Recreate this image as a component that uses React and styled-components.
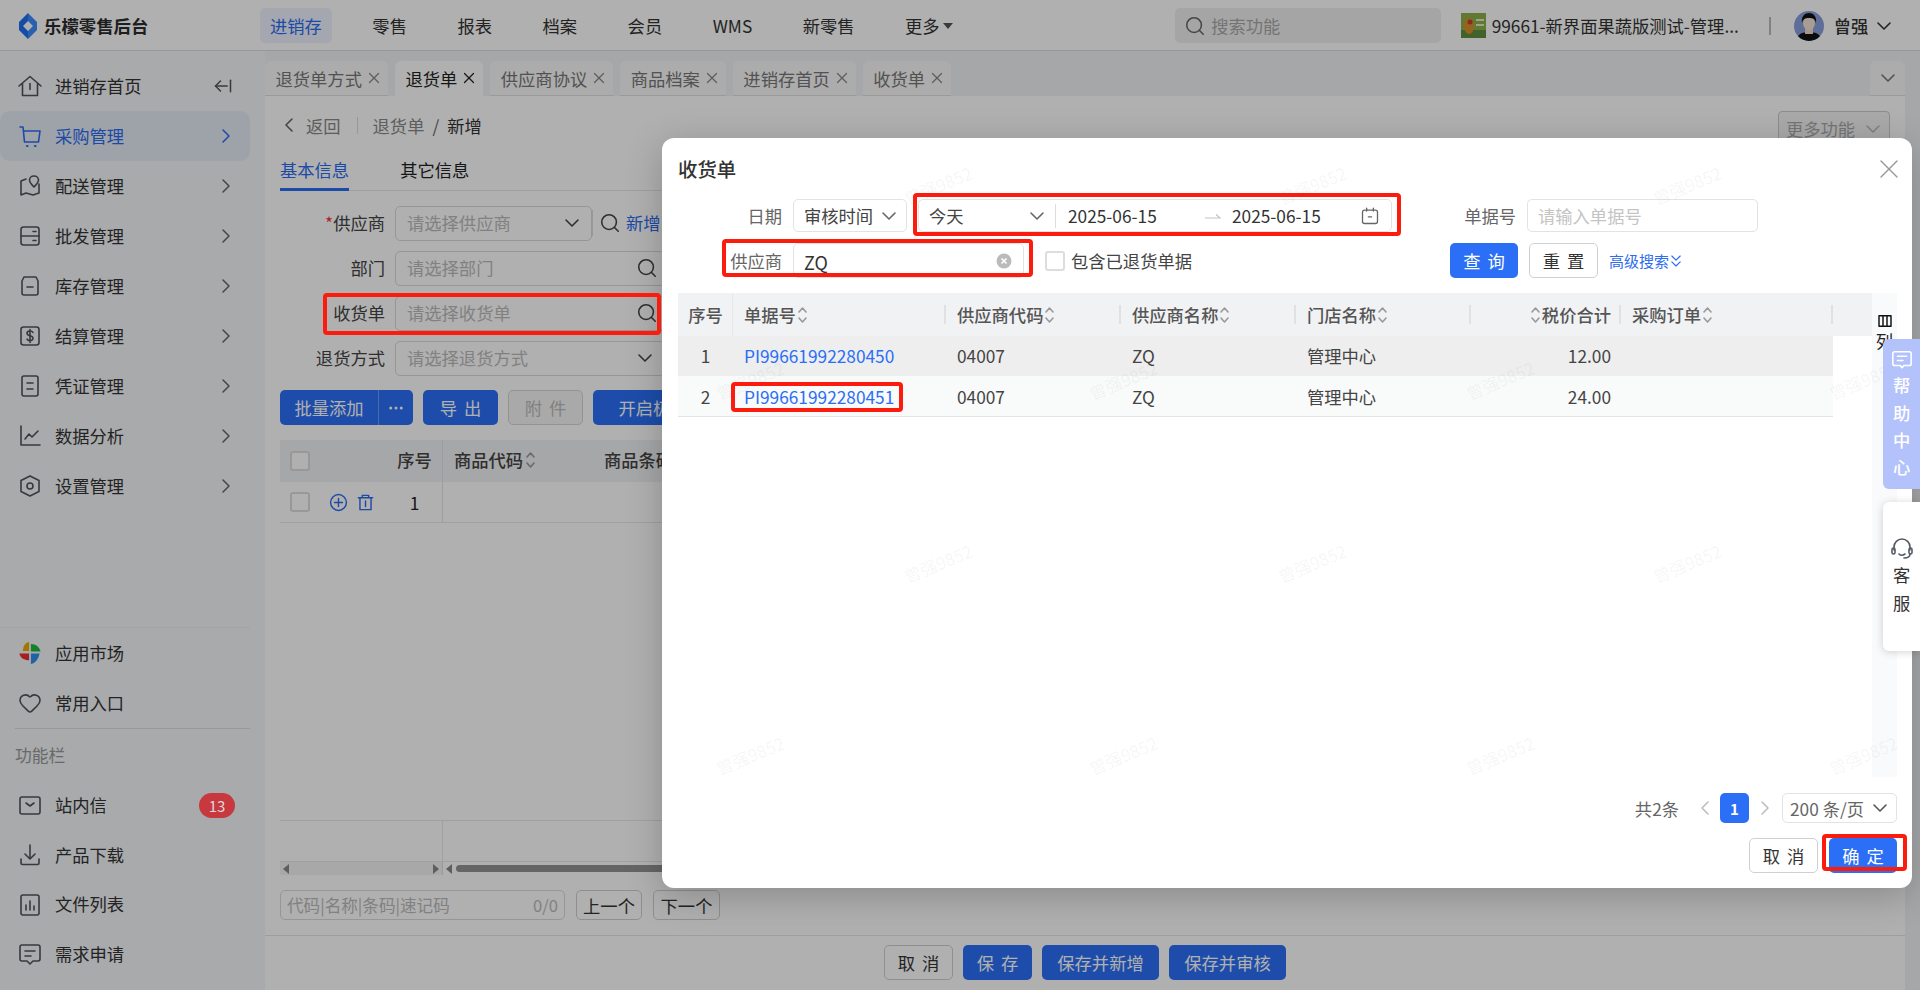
import React from 'react';
import styled, { createGlobalStyle } from 'styled-components';
import { X, ChevronRight, ChevronDown, ChevronLeft, ChevronsDown, Search, ArrowLeftFromLine, Heart, Ellipsis } from 'lucide-react';

const Global = createGlobalStyle`
  html, body { margin: 0; padding: 0; background: #fff; }
  body { font-family: "Noto Sans CJK SC", "Noto Sans", sans-serif; font-size: 17.3px; color: #222; }
  * { box-sizing: border-box; }
`;

const Page = styled.div`
  position: relative; width: 1920px; height: 990px; overflow: hidden; display: flex; flex-direction: column; background: #f0f2f5;
`;
const Mask = styled.div`position: absolute; inset: 0; background: rgba(0,0,0,.31); z-index: 10;`;

/* header */
const Header = styled.header`
  height: 51px; flex: none; display: flex; align-items: center; background: #fff; border-bottom: 1px solid #dcdcdc; padding: 1px 0 0 19px;
`;
const Logo = styled.div`display: flex; align-items: center; gap: 7px; width: 241px; font-size: 17.4px; font-weight: 700; color: #2c2c2c;`;
const TopNav = styled.nav`display: flex; gap: 30.5px; align-items: center;`;
const TopItem = styled.div`
  height: 35px; padding: 0 10px; display: flex; align-items: center; border-radius: 5px; white-space: nowrap;
  background: ${p => p.$on ? '#eef2ff' : 'transparent'}; color: ${p => p.$on ? '#2b6cf0' : '#333'};
`;
const Caret = styled.span`display: inline-block; margin-left: 3px; border: 5px solid transparent; border-top: 6px solid #555; border-bottom: 0;`;
const TopSearch = styled.div`
  margin-left: 212px; width: 266px; height: 35px; border-radius: 5px; background: #f0f0f0; display: flex; align-items: center; gap: 5.5px; padding-left: 9px; color: #a9a9a9;
`;
const Store = styled.div`margin-left: 20px; display: flex; align-items: center; gap: 6px; width: 308px; font-size: 17.3px; color: #333; white-space: nowrap;`;
const HeaderRule = styled.i`width: 2px; height: 18px; background: #bbb;`;
const User = styled.div`margin-left: 23px; display: flex; align-items: center; gap: 10px; font-weight: 500; color: #333;`;

/* body */
const Body = styled.div`flex: 1; display: flex; min-height: 0;`;
const Side = styled.aside`width: 265px; flex: none; background: #f3f6fa; display: flex; flex-direction: column; padding: 10px 0 11px;`;
const SideTop = styled.div`flex: 1;`;
const SideLower = styled.div`width: 250px; border-top: 1px solid #e9ecf1;`;
const SideItem = styled.div`
  width: 250px; height: ${p => p.$h || 50}px; display: flex; align-items: center; padding: 0 18px 0 19px; gap: 14px; border-radius: 10px; color: ${p => p.$on ? '#2b6cf0' : '#333'};
  background: ${p => p.$on ? '#e5ebf5' : 'transparent'};
  & > span { flex: 1; white-space: nowrap; padding-bottom: 2px; }
  & > svg:first-child { color: ${p => p.$on ? '#2b6cf0' : '#50535a'}; flex: none; width: 24px; height: 24px; margin: 0 -1px; }
`;
const SideChevron = styled(ChevronRight)`margin: 0 -6px; flex: none;`;
const Collapse = styled(ArrowLeftFromLine)`margin-right: -1px; flex: none;`;
const SideGroupLabel = styled.div`
  margin-left: 15px; height: 52px; border-top: 1px solid #d9dce2; display: flex; align-items: center; color: #999; font-size: 16.8px;
`;
const Badge = styled.b`
  position: relative; z-index: 11; width: 36px; height: 25px; border-radius: 13px; background: #c7393f; color: #e0d7d7; font-weight: 400; font-size: 15px; display: flex; align-items: center; justify-content: center; margin-right: -3px;
`;

/* main */
const Main = styled.main`flex: 1; display: flex; flex-direction: column; min-width: 0;`;
const TabBar = styled.div`height: 45px; flex: none; display: flex; align-items: flex-end; gap: 7px; padding-right: 15px;`;
const Tab = styled.div`
  height: 35px; padding: 0 8px 0 10.5px; display: flex; align-items: center; gap: 6px; border-radius: 6px 6px 0 0; color: ${p => p.$on ? '#222' : '#777'}; white-space: nowrap;
  background: ${p => p.$on ? '#fff' : '#f9f9f9'}; border-bottom: 1px solid ${p => p.$on ? '#fff' : '#e0e0e0'};
`;
const TabClose = styled(X)`margin: 0 -3px; flex: none;`;
const TabMore = styled(Tab)`margin-left: auto; width: 35px; padding: 0; justify-content: center; color: #888;`;
const Content = styled.div`flex: 1; margin-right: 15px; background: #fff; display: flex; flex-direction: column; min-height: 0;`;
const Crumbs = styled.div`height: 32px; flex: none; margin: 13px 15px 0 20px; display: flex; align-items: center; color: #888;`;
const CrumbBack = styled(ChevronLeft)`margin: 0 5px 0 -8px; flex: none;`;
const CrumbRule = styled.i`width: 1px; height: 17px; background: #ddd; margin: 0 15px 0 16px;`;
const CrumbSep = styled.span`margin: 0 8px; color: #666;`;
const CrumbNow = styled.span`color: #333;`;
const MoreBtn = styled.div`
  margin: 2px 0 0 auto; width: 112px; height: 35px; align-self: flex-start; border: 1px solid #ccc; border-radius: 4px; color: #aaa; display: flex; align-items: center; justify-content: space-between; padding: 0 10px 0 7px; background: #f5f5f5;
`;
const InfoTabs = styled.div`height: 40px; flex: none; margin: 10px 15px 0; border-bottom: 1px solid #e8e8e8; display: flex; gap: 51px;`;
const InfoTab = styled.div`
  height: 40px; padding-top: 6px; border-bottom: 3px solid ${p => p.$on ? '#2b6cf0' : 'transparent'}; color: ${p => p.$on ? '#2b6cf0' : '#222'}; margin-bottom: -1px;
`;
const FormArea = styled.div`margin: 15px 15px 0; display: flex; flex-direction: column; gap: 10px;`;
const FormRow = styled.div`display: flex; align-items: center; gap: 10px; height: 35px;`;
const FormLabel = styled.label`width: 105px; text-align: right; color: #444; padding-bottom: 2px; & em { color: #e33; font-style: normal; }`;
const FormInput = styled.div`
  width: ${p => p.$w || 270}px; height: 35px; border: 1px solid #d9d9d9; border-radius: 5px; display: flex; align-items: center; justify-content: space-between; padding: 0 13px 2px 11px; color: #bbb; flex: none;
  & svg { color: #444; }
`;
const FormSearch = styled(Search)`margin-right: -7px; flex: none;`;
const AddLink = styled.div`display: flex; align-items: center; gap: 5px; margin-left: -10px; padding-bottom: 2px; color: #2b6cf0; & i { width: 1px; height: 26px; background: #ddd; margin-right: 1px; } & svg { color: #444; }`;
const Toolbar = styled.div`margin: 14px 15px 0; height: 35px; flex: none; display: flex; gap: 10px;`;
const PrimaryBtn = styled.button`
  font: inherit; word-spacing: 3px; width: ${p => p.$w}px; height: 35px; border: 0; border-radius: 5px; background: #2a6ff6; color: #fff; display: flex; align-items: center; justify-content: center; padding: 0; white-space: pre; flex: none;
`;
const BtnSplit = styled.span`
  height: 100%; display: flex; align-items: center; justify-content: center;
  &:first-child { width: 98px; } &:last-child { width: 35px; border-left: 1px solid #6d9cf8; }
`;
const GhostBtn = styled.button`
  font: inherit; word-spacing: 3px; width: ${p => p.$w}px; height: ${p => p.$h || 35}px; margin-left: ${p => p.$ml || 0}px; border: 1px solid ${p => p.$off ? '#d6d6d6' : '#d0d0d0'}; border-radius: 5px; background: ${p => p.$off ? '#f5f5f5' : '#fff'}; color: ${p => p.$off ? '#bbb' : '#333'}; padding: 0; white-space: pre; flex: none;
`;
const PageTable = styled.div`margin: 15px 15px 0; flex: 1; display: flex; flex-direction: column; min-height: 0;`;
const PageHead = styled.div`height: 42px; flex: none; background: #f0f2f5; display: grid; grid-template-columns: 163px 150px 150px 1fr; align-items: center; font-weight: 500; color: #444;`;
const CheckCell = styled.div`
  height: 100%; display: flex; align-items: center; padding-left: 10px; border-right: 1px solid #e2e4e8;
`;
const SeqHead = styled.strong`margin-left: auto; margin-right: 10px; font-weight: 500; width: 35px; text-align: center; padding-bottom: 3px;`;
const SeqCell = styled(SeqHead)`font-weight: 400; padding-bottom: 0;`;
const HeadCell = styled.div`display: flex; align-items: center; gap: 2px; padding: 0 0 3px 11px; white-space: nowrap;`;
const PageRow = styled.div`height: 41px; flex: none; border-bottom: 1px solid #e8e8e8; display: grid; grid-template-columns: 163px 1fr;`;
const Box = styled.span`
  width: ${p => p.$s || 20}px; height: ${p => p.$s || 20}px; flex: none; border: 2px solid #ddd; border-radius: 3px; background: #fff;
`;
const RowTools = styled.div`display: flex; align-items: center; gap: 8px; margin-left: 19px; color: #2b6cf0;`;
const Grow = styled.div`flex: 1;`;
const SumRow = styled.div`height: 42px; flex: none; border-top: 1px solid #e8e8e8; border-bottom: 1px solid #e8e8e8; & > div { width: 163px; height: 100%; border-right: 1px solid #e8e8e8; }`;
const ScrollRow = styled.div`height: 13px; flex: none; display: flex; align-items: center; background: #fff;`;
const ScrollFixed = styled.div`width: 163px; height: 100%; flex: none; background: #f3f3f3; border-right: 1px solid #e0e0e0; display: flex; align-items: center; justify-content: space-between; padding: 0 3px;`;
const Tri = styled.i`width: 0; height: 0; border-top: 5px solid transparent; border-bottom: 5px solid transparent; ${p => p.$r ? 'border-left: 6px solid #888;' : 'border-right: 6px solid #888;'}`;
const ScrollStart = styled.div`margin-left: 3px;display: flex;`;
const Thumb = styled.div`margin-left: 4px; flex: 1; height: 7px; border-radius: 4px; background: #939393;`;
const FindRow = styled.div`margin: 15px 15px 0; height: 30px; flex: none; display: flex; gap: 11px;`;
const FindInput = styled.div`width: 285px; border: 1px solid #d9d9d9; border-radius: 5px; display: flex; justify-content: space-between; align-items: center; padding: 0 6px; color: #bbb; font-size: 16.6px;`;
const Footer = styled.footer`margin-top: 15px; height: 55px; flex: none; border-top: 1px solid #e5e5e5; display: flex; justify-content: center; gap: 10px; padding-top: 9px;`;

/* modal */
const Modal = styled.section`
  position: absolute; z-index: 12; left: 662px; top: 138px; width: 1250px; height: 750px; background: #fff; border-radius: 12px; overflow: hidden;
  box-shadow: 0 8px 36px rgba(0,0,0,.22); padding: 0 15px 15px 16px; display: flex; flex-direction: column;
`;
const ModalHead = styled.div`height: 61px; flex: none; display: flex; align-items: center; justify-content: space-between; font-size: 19.4px; font-weight: 500; color: #333;`;
const ModalClose = styled(X)`margin: 0 -8px; color: #999;`;
const Filters = styled.div`display: grid; grid-template-columns: 772px 1fr; row-gap: 11px; flex: none;`;
const FilterLine = styled.div`display: flex; align-items: center; height: ${p => p.$h}px;`;
const FilterLabel = styled.label`width: ${p => p.$w}px; text-align: right; margin-right: 11px; color: #666; flex: none;`;
const FieldBox = styled.div`
  width: ${p => p.$w}px; height: 100%; flex: none; border: 1px solid #e3e3e3; border-radius: 5px; display: flex; align-items: center; padding: 0 11px 0 10px; color: #444; justify-content: space-between;
  margin-left: ${p => p.$ml || 0}px; & svg { color: #666; flex: none; }
`;
const Placeholder = styled.span`color: #c4c4c4;`;
const ZQ = styled.span`color: #333; font-size: 18px; padding-top: 3px;`;
const RangeKind = styled.div`width: 127px; height: 24px; display: flex; align-items: center; justify-content: space-between; padding: 0 12px 0 0; border-right: 1px solid #ddd; margin-right: 11px; flex: none;`;
const RangeDate = styled.span`width: ${p => p.$w}px; color: #333; flex: none;`;
const RangeArrow = styled.svg`margin-right: 10px; flex: none;`;
const Check = styled.label`display: flex; align-items: center; gap: 6px; margin-left: 21px; color: #444;`;
const ClearDot = styled.svg`flex: none;`;
const AdvLink = styled.span`color: #2b6cf0; font-size: 15px; display: flex; align-items: center; margin-left: 11px; white-space: nowrap;`;
const AdvChevrons = styled(ChevronsDown)`margin: 0 -3px; flex: none;`;
const TableWrap = styled.div`margin-top: 15px; flex: 1; display: flex; min-height: 0; position: relative;`;
const TableMain = styled.div`width: 1194px; flex: none;`;
const THead = styled.div`height: 43px; background: #f1f2f4; display: grid; grid-template-columns: 55px 213px 175px 175px 175px 150px 212px 39px; align-items: center;`;
const TH = styled.div`
  height: 100%; display: flex; align-items: center; justify-content: ${p => p.$j || 'flex-start'}; padding: 0 ${p => p.$pr ?? 0}px 0 ${p => p.$pl ?? 11}px; font-weight: 500; color: #555; position: relative; gap: 1px; white-space: nowrap;
  &::after { content: ""; position: absolute; right: 0; top: ${p => p.$full ? 0 : 12}px; bottom: ${p => p.$full ? 0 : 12}px; width: ${p => p.$full ? 1 : 2}px; background: ${p => p.$plain ? 'transparent' : p.$full ? '#e7e8ea' : '#e0e1e3'}; }
`;
const TRow = styled.div`
  height: ${p => p.$h}px; width: 1155px; background: ${p => p.$bg}; border-bottom: 1px solid ${p => p.$line}; display: grid; grid-template-columns: 55px 213px 175px 175px 175px 150px 212px; align-items: center; color: #444;
`;
const TD = styled.div`padding: 0 ${p => p.$pr ?? 0}px 0 ${p => p.$pl ?? 11}px; text-align: ${p => p.$a || 'left'}; white-space: nowrap;`;
const DocLink = styled(TD)`color: #2a6ff6;`;
const ColPanel = styled.div`flex: 1; background: #f9fafb; display: flex; flex-direction: column; align-items: center; padding-top: 20px; color: #222; line-height: 24px;`;
const Pager = styled.div`margin-top: 16px; height: 30px; flex: none; display: flex; align-items: center; justify-content: flex-end; color: #666;`;
const PagerNum = styled.span`width: 29px; height: 30px; border-radius: 5px; background: #2a6ff6; color: #fff; display: flex; align-items: center; justify-content: center; font-weight: 600; font-size: 15px; margin: 0 9.5px;`;
const PagerSize = styled.div`width: 115px; height: 30px; border: 1px solid #e3e3e3; border-radius: 5px; display: flex; align-items: center; justify-content: space-between; padding: 0 10px 0 7px; margin-left: 11.5px;`;
const PagerBack = styled(ChevronLeft)`margin: 0 -6px 0 13.5px; color: #bbb; flex: none;`;
const PagerNext = styled(ChevronRight)`margin: 0 -6px; color: #bbb; flex: none;`;
const ModalFoot = styled.div`margin-top: 15px; flex: none; display: flex; justify-content: flex-end; gap: 11px;`;

/* floating */
const Float = styled.div`
  position: absolute; z-index: 13; right: 0; top: ${p => p.$t}px; width: 37px; height: ${p => p.$h}px; border-radius: 6px 0 0 6px; display: flex; flex-direction: column; align-items: center; justify-content: ${p => p.$c ? 'center' : 'flex-start'}; padding-top: ${p => p.$c ? 6 : 10}px;
  background: ${p => p.$bg}; color: ${p => p.$fg}; box-shadow: ${p => p.$c ? '0 1px 8px rgba(0,0,0,.18)' : 'none'};
`;
const VText = styled.span`writing-mode: vertical-rl; white-space: nowrap; letter-spacing: 10px; margin-top: ${p => p.$mt}px; line-height: 1; font-weight: ${p => p.$w || 400};`;

/* annotation boxes */
const Mark = styled.div`
  position: absolute; z-index: 14; left: ${p => p.$x}px; top: ${p => p.$y}px; width: ${p => p.$w}px; height: ${p => p.$h}px; border: 4px solid #fb1c0e; border-radius: 4px; pointer-events: none;
`;

/* watermarks */
const MarkLayer = styled.div`
  position: absolute; pointer-events: none; width: 1920px; height: 990px; left: ${p => p.$ox}px; top: ${p => p.$oy}px; z-index: ${p => p.$z};
`;
const Wm = styled.span`
  position: absolute; left: ${p => p.$x}px; top: ${p => p.$y}px; transform: translate(-50%,-50%) rotate(-22deg); font-size: 17px; white-space: nowrap; color: ${p => p.$c};
`;

const Svg = ({ s = 24, w = 1.6, children, ...r }) => (
  <svg width={s} height={s} viewBox="0 0 24 24" fill="none" stroke="currentColor" strokeWidth={w} strokeLinecap="round" strokeLinejoin="round" {...r}>{children}</svg>
);
const I = {
  home: <Svg><path d="M1 12 12 2.500 23 12M4.500 9.500V21.500h15V9.500M12 9.500v6" /></Svg>,
  cart: <Svg><path d="M2 3h3l1.500 15h14L22 7H6" /><path d="M9 22h.5M17 22h.5" strokeWidth="2.200" /></Svg>,
  map: <Svg><path d="M8 5 3 7v14l5-2 7 2 6-2V10" /><path d="M16 2c-2.800 0-4.500 2-4.500 4 0 2.600 3 5.500 4.500 7 1.500-1.500 4.500-4.400 4.500-7 0-2-1.700-4-4.500-4Z" /></Svg>,
  inbox: <Svg><rect x="3" y="3" width="18" height="18" rx="2.500" /><path d="M3 12h18M15 7.500h3M15 16.500h3" /></Svg>,
  store: <Svg><path d="M6 3h12l2 4v12a2 2 0 0 1-2 2H6a2 2 0 0 1-2-2V7Z" /><path d="M9 13h6" /></Svg>,
  money: <Svg><rect x="3" y="3" width="18" height="18" rx="2.500" /><path d="M15 8.500c-.5-1-1.500-1.500-3-1.500-1.600 0-3 .8-3 2.300 0 3.200 6 1.800 6 5 0 1.500-1.400 2.300-3 2.300-1.500 0-2.500-.5-3-1.500M12 5.500v13" /></Svg>,
  doc: <Svg><rect x="4" y="2" width="16" height="20" rx="2" /><path d="M9 9h6M9 15h6" /></Svg>,
  chart: <Svg><path d="M3 2v19h19" /><path d="M7 15l4-5 3 3 6-6" /></Svg>,
  gear: <Svg><path d="m12 2 9 4.500v11L12 22l-9-4.500v-11Z" /><circle cx="12" cy="12" r="3" /></Svg>,
  heart: <Heart strokeWidth={1.6} />,
  mail: <Svg><rect x="2" y="4" width="20" height="17" rx="2" /><path d="m8 10 4 3 4-3" /></Svg>,
  down: <Svg><path d="M12 2v14M7 11l5 5 5-5M3 16v4a1.500 1.500 0 0 0 1.500 1.500h15A1.500 1.500 0 0 0 21 20v-4" /></Svg>,
  list: <Svg><rect x="3" y="2" width="18" height="20" rx="2" /><path d="M8 17v-5M12 17V8M16 17v-4" /></Svg>,
  req: <Svg><path d="M4 3h16a2 2 0 0 1 2 2v12a2 2 0 0 1-2 2h-5l-3 3-3-3H4a2 2 0 0 1-2-2V5a2 2 0 0 1 2-2Z" /><path d="M7 9h10M7 14h6" /></Svg>,
  apps: (
    <svg width="22" height="25" viewBox="0 0 22 25">
      <path d="M10 1C5 2 4 6 3.500 10.500H10Z" fill="#f2a900" />
      <path d="M12 3c5 0 9 3 10 8H12Z" fill="#1dbb3e" />
      <path d="M0 13h10v7C5 20 1 18 0 13Z" fill="#ec2f34" />
      <path d="M12 13h9c-1 5-4 10-9 11Z" fill="#2e8ff0" />
    </svg>
  ),
};

const Sorter = () => (
  <svg width="11" height="20" viewBox="0 0 11 20" fill="none" stroke="#999" strokeWidth="1.600" strokeLinecap="round" strokeLinejoin="round"><path d="m2 7 3.500-4L9 7M2 13l3.500 4L9 13" /></svg>
);
const ChevIcon = styled(ChevronDown)`margin: 0 -6px; flex: none;`;
const Chev = ({ c }) => <ChevIcon size={24} strokeWidth={1.6} color={c} />;

const LogoMark = () => (
  <svg width="18" height="26" viewBox="0 0 18 26"><path d="M9 0 0 9v8l9 9V18L4 13l5-5Z" fill="#1f6ff2" /><path d="M9 0l9 9v8l-9 9v-8l5-5-5-5Z" fill="#3d8bff" /></svg>
);
const StorePic = () => (
  <svg width="25" height="25" viewBox="0 0 25 25">
    <rect width="25" height="25" fill="#8fb04a" />
    <rect y="17" width="25" height="8" fill="#5f8f3a" />
    <ellipse cx="8" cy="13" rx="5" ry="8" fill="#d9902e" />
    <circle cx="9" cy="9" r="2.500" fill="#c8402c" />
    <rect x="15" y="6" width="8" height="2" fill="#e4ecc2" />
    <rect x="15" y="11" width="8" height="2" fill="#e4ecc2" />
  </svg>
);
const Avatar = () => (
  <svg width="30" height="32" viewBox="0 0 30 32">
    <defs><clipPath id="ava"><circle cx="15" cy="16" r="15" /></clipPath></defs>
    <g clipPath="url(#ava)">
      <rect width="30" height="32" fill="#8aa0dc" />
      <path d="M2 32c1-8 6-10 13-10s12 2 13 10Z" fill="#111" />
      <rect x="11" y="17" width="8" height="7" fill="#f2d8c8" />
      <ellipse cx="15" cy="13" rx="6" ry="7" fill="#f5e2d6" />
      <path d="M8 13c-1-7 3-10 7-10s8 3 7 10c-1-4-3-5-7-5s-6 1-7 5Z" fill="#111" />
    </g>
  </svg>
);

const WM = [
  [938, 185], [1312, 185], [1687, 185],
  [750, 380], [1123, 380], [1500, 380], [1863, 380],
  [938, 563], [1312, 563], [1687, 563],
  [750, 755], [1123, 755], [1500, 755], [1863, 755],
  [374, 380], [563, 563], [188, 563],
];
const Watermarks = ({ ox, oy, z, c }) => (
  <MarkLayer $ox={ox} $oy={oy} $z={z}>
    {WM.map(([x, y]) => <Wm key={x + '-' + y} $x={x} $y={y} $c={c}>曾强9852</Wm>)}
  </MarkLayer>
);

const topNav = ['零售', '报表', '档案', '会员', 'WMS', '新零售'];
const sideTop = [['cart', '采购管理'], ['map', '配送管理'], ['inbox', '批发管理'], ['store', '库存管理'], ['money', '结算管理'], ['doc', '凭证管理'], ['chart', '数据分析'], ['gear', '设置管理']];
const tabs = ['退货单方式', '退货单', '供应商协议', '商品档案', '进销存首页', '收货单'];
const rows = [
  { n: 1, id: 'PI99661992280450', total: '12.00', bg: '#eeeeee', line: '#eeeeee', h: 40 },
  { n: 2, id: 'PI99661992280451', total: '24.00', bg: '#f9fafa', line: '#e4e4e4', h: 41 },
];

export default function App() {
  return (
    <Page>
      <Global />
      <Header>
        <Logo><LogoMark />乐檬零售后台</Logo>
        <TopNav>
          <TopItem $on>进销存</TopItem>
          {topNav.map(t => <TopItem key={t}>{t}</TopItem>)}
          <TopItem>更多<Caret /></TopItem>
        </TopNav>
        <TopSearch><Search size={22} strokeWidth={1.7} color="#666" />搜索功能</TopSearch>
        <Store><StorePic />99661-新界面果蔬版测试-管理...</Store>
        <HeaderRule />
        <User><Avatar />曾强<Chev c="#333" /></User>
      </Header>
      <Body>
        <Side>
          <SideTop>
            <SideItem>{I.home}<span>进销存首页</span><Collapse size={20} strokeWidth={1.8} color="#555" /></SideItem>
            {sideTop.map(([ic, t], i) => (
              <SideItem key={t} $on={i === 0}>{I[ic]}<span>{t}</span><SideChevron size={24} strokeWidth={1.5} color={i === 0 ? '#2b6cf0' : '#666'} /></SideItem>
            ))}
          </SideTop>
          <SideLower>
            <SideItem>{I.apps}<span>应用市场</span></SideItem>
            <SideItem>{I.heart}<span>常用入口</span></SideItem>
            <SideGroupLabel>功能栏</SideGroupLabel>
            <SideItem>{I.mail}<span>站内信</span><Badge>13</Badge></SideItem>
            <SideItem>{I.down}<span>产品下载</span></SideItem>
            <SideItem $h={49}>{I.list}<span>文件列表</span></SideItem>
            <SideItem>{I.req}<span>需求申请</span></SideItem>
          </SideLower>
        </Side>
        <Main>
          <TabBar>
            {tabs.map((t, i) => <Tab key={t} $on={i === 1}>{t}<TabClose size={18} strokeWidth={1.6} color={i === 1 ? '#222' : '#888'} /></Tab>)}
            <TabMore><Chev c="#777" /></TabMore>
          </TabBar>
          <Content>
            <Crumbs>
              <CrumbBack size={24} strokeWidth={1.6} color="#666" />返回<CrumbRule />退货单<CrumbSep>/</CrumbSep><CrumbNow>新增</CrumbNow>
              <MoreBtn>更多功能<Chev c="#bbb" /></MoreBtn>
            </Crumbs>
            <InfoTabs><InfoTab $on>基本信息</InfoTab><InfoTab>其它信息</InfoTab></InfoTabs>
            <FormArea>
              <FormRow>
                <FormLabel><em>*</em>供应商</FormLabel>
                <FormInput $w={197}>请选择供应商<Chev c="#444" /></FormInput>
                <AddLink><i /><Search size={22} strokeWidth={1.7} />新增</AddLink>
              </FormRow>
              <FormRow><FormLabel>部门</FormLabel><FormInput>请选择部门<FormSearch size={22} strokeWidth={1.7} /></FormInput></FormRow>
              <FormRow><FormLabel>收货单</FormLabel><FormInput>请选择收货单<FormSearch size={22} strokeWidth={1.7} /></FormInput></FormRow>
              <FormRow><FormLabel>退货方式</FormLabel><FormInput>请选择退货方式<Chev c="#444" /></FormInput></FormRow>
            </FormArea>
            <Toolbar>
              <PrimaryBtn $w={133}><BtnSplit>批量添加</BtnSplit><BtnSplit><Ellipsis size={18} /></BtnSplit></PrimaryBtn>
              <PrimaryBtn $w={75}>导 出</PrimaryBtn>
              <GhostBtn $w={75} $off>附 件</GhostBtn>
              <PrimaryBtn $w={120}>开启极速</PrimaryBtn>
            </Toolbar>
            <PageTable>
              <PageHead>
                <CheckCell><Box /><SeqHead>序号</SeqHead></CheckCell>
                <HeadCell>商品代码<Sorter /></HeadCell>
                <HeadCell>商品条码<Sorter /></HeadCell>
                <HeadCell>商品名称<Sorter /></HeadCell>
              </PageHead>
              <PageRow>
                <CheckCell>
                  <Box />
                  <RowTools>
                    <Svg s={19} w={1.8}><circle cx="12" cy="12" r="10" /><path d="M12 7v10M7 12h10" /></Svg>
                    <Svg s={19} w={1.8}><path d="M3 6h18M8 6V3h8v3M5 6v15h14V6M12 10v7" /></Svg>
                  </RowTools>
                  <SeqCell>1</SeqCell>
                </CheckCell>
                <div />
              </PageRow>
              <Grow />
              <SumRow><div /></SumRow>
              <ScrollRow>
                <ScrollFixed><Tri /><Tri $r /></ScrollFixed>
                <ScrollStart><Tri /></ScrollStart>
                <Thumb />
              </ScrollRow>
            </PageTable>
            <FindRow>
              <FindInput>代码|名称|条码|速记码<span>0/0</span></FindInput>
              <GhostBtn $w={66} $h={30}>上一个</GhostBtn>
              <GhostBtn $w={67} $h={30}>下一个</GhostBtn>
            </FindRow>
            <Footer>
              <GhostBtn $w={69}>取 消</GhostBtn>
              <PrimaryBtn $w={69}>保 存</PrimaryBtn>
              <PrimaryBtn $w={117}>保存并新增</PrimaryBtn>
              <PrimaryBtn $w={117}>保存并审核</PrimaryBtn>
            </Footer>
          </Content>
        </Main>
      </Body>
      <Watermarks ox={0} oy={0} z={9} c="rgba(0,0,0,.02)" />
      <Mask />
      <Modal>
        <Watermarks ox={-662} oy={-138} z={5} c="rgba(0,0,0,.055)" />
        <ModalHead>收货单<ModalClose size={32} strokeWidth={1} /></ModalHead>
        <Filters>
          <FilterLine $h={33}>
            <FilterLabel $w={104}>日期</FilterLabel>
            <FieldBox $w={114}>审核时间<Chev c="#666" /></FieldBox>
            <FieldBox $w={474} $ml={11}>
              <RangeKind>今天<Chev c="#666" /></RangeKind>
              <RangeDate $w={135}>2025-06-15</RangeDate>
              <RangeArrow width="17" height="12" viewBox="0 0 17 12" fill="none" stroke="#c4c4c4" strokeWidth="1.200"><path d="M1 8h15l-4-3.500" /></RangeArrow>
              <RangeDate $w={127}>2025-06-15</RangeDate>
              <Svg s={20} w={1.6}><rect x="3" y="5" width="18" height="16" rx="2.500" /><path d="M8 2.500V6M16 2.500V6M10 13h4" /></Svg>
            </FieldBox>
          </FilterLine>
          <FilterLine $h={33}>
            <FilterLabel $w={66}>单据号</FilterLabel>
            <FieldBox $w={231}><Placeholder>请输入单据号</Placeholder></FieldBox>
          </FilterLine>
          <FilterLine $h={35}>
            <FilterLabel $w={104}>供应商</FilterLabel>
            <FieldBox $w={231}>
              <ZQ>ZQ</ZQ>
              <ClearDot width="16" height="16" viewBox="0 0 16 16"><circle cx="8" cy="8" r="7.500" fill="#bbb" /><path d="m5.500 5.500 5 5m0-5-5 5" stroke="#fff" strokeWidth="1.600" /></ClearDot>
            </FieldBox>
            <Check><Box $s={20} />包含已退货单据</Check>
          </FilterLine>
          <FilterLine $h={35}>
            <PrimaryBtn $w={68}>查 询</PrimaryBtn>
            <GhostBtn $w={69} $ml={11}>重 置</GhostBtn>
            <AdvLink>高级搜索<AdvChevrons size={20} strokeWidth={1.4} /></AdvLink>
          </FilterLine>
        </Filters>
        <TableWrap>
          <TableMain>
            <THead>
              <TH $j="center" $pl={0} $full>序号</TH>
              <TH>单据号<Sorter /></TH>
              <TH>供应商代码<Sorter /></TH>
              <TH>供应商名称<Sorter /></TH>
              <TH>门店名称<Sorter /></TH>
              <TH $j="flex-end" $pr={10}><Sorter />税价合计</TH>
              <TH>采购订单<Sorter /></TH>
              <TH $plain />
            </THead>
            {rows.map(r => (
              <TRow key={r.n} $h={r.h} $bg={r.bg} $line={r.line}>
                <TD $a="center" $pl={0}>{r.n}</TD>
                <DocLink>{r.id}</DocLink>
                <TD>04007</TD>
                <TD>ZQ</TD>
                <TD>管理中心</TD>
                <TD $a="right" $pr={10}>{r.total}</TD>
                <TD />
              </TRow>
            ))}
          </TableMain>
          <ColPanel>
            <Svg s={16} w={2.200} style={{ color: '#111' }}><rect x="3" y="4" width="18" height="16" /><path d="M9 4v16M15 4v16" /></Svg>
            列
          </ColPanel>
        </TableWrap>
        <Pager>
          共2条
          <PagerBack size={24} strokeWidth={1.5} />
          <PagerNum>1</PagerNum>
          <PagerNext size={24} strokeWidth={1.5} />
          <PagerSize>200 条/页<Chev c="#555" /></PagerSize>
        </Pager>
        <ModalFoot>
          <GhostBtn $w={69}>取 消</GhostBtn>
          <PrimaryBtn $w={68}>确 定</PrimaryBtn>
        </ModalFoot>
      </Modal>
      <Float $t={339} $h={150} $bg="#b3c2fb" $fg="#fff">
        <Svg s={22} w={1.7}><path d="M4 3h16a2 2 0 0 1 2 2v11a2 2 0 0 1-2 2h-6l-2 2.500L10 18H4a2 2 0 0 1-2-2V5a2 2 0 0 1 2-2Z" /><path d="M7 8h10M7 12.500h6" /></Svg>
        <VText $mt={6} $w={500}>帮助中心</VText>
      </Float>
      <Float $t={502} $h={149} $bg="#fff" $fg="#333" $c>
        <Svg s={24} w={1.6} style={{ color: '#555a66' }}><path d="M4 13V10a8 8 0 0 1 16 0v3" /><rect x="2" y="11" width="3" height="6" rx="1.500" /><rect x="19" y="11" width="3" height="6" rx="1.500" /><path d="M9 17c1.500 1.500 4 1.500 6 0M20 17c0 3-3 4-6 4" /></Svg>
        <VText $mt={6}>客服</VText>
      </Float>
      <Mark $x={323} $y={293} $w={338} $h={42} />
      <Mark $x={913} $y={193} $w={488} $h={43} />
      <Mark $x={722} $y={239} $w={311} $h={38} />
      <Mark $x={731} $y={382} $w={172} $h={30} />
      <Mark $x={1822} $y={834} $w={85} $h={37} />
    </Page>
  );
}
